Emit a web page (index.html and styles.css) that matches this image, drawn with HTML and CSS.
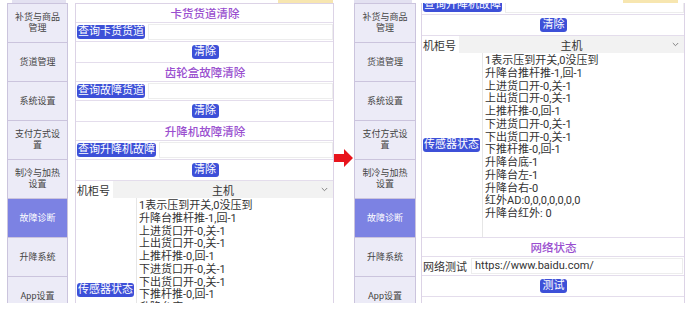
FILE: index.html
```html
<!DOCTYPE html>
<html lang="zh-CN">
<head>
<meta charset="utf-8">
<title>故障诊断</title>
<link rel="stylesheet" href="styles.css">
</head>
<body>
<div class="page">
  <div class="phone phone-left">
    <div class="strip"><span class="strip-tab"></span><span class="strip-yellow"></span></div>
    <div class="body">
      <nav class="sidebar">
        <div class="nav-item">补货与商品管理</div>
        <div class="nav-item">货道管理</div>
        <div class="nav-item">系统设置</div>
        <div class="nav-item">支付方式设置</div>
        <div class="nav-item">制冷与加热设置</div>
        <div class="nav-item active">故障诊断</div>
        <div class="nav-item">升降系统</div>
        <div class="nav-item">App设置</div>
      </nav>
      <div class="content">
        <div class="panel panel-top">
          <div class="row title-row">卡货货道清除</div>
          <div class="row query-row"><span class="btn">查询卡货货道</span><span class="field"></span></div>
          <div class="row action-row"><span class="btn btn-short">清除</span></div>
          <div class="row title-row">齿轮盒故障清除</div>
          <div class="row query-row"><span class="btn">查询故障货道</span><span class="field"></span></div>
          <div class="row action-row"><span class="btn btn-short">清除</span></div>
          <div class="row title-row">升降机故障清除</div>
          <div class="row query-row"><span class="btn">查询升降机故障</span><span class="field"></span></div>
          <div class="row action-row"><span class="btn btn-short">清除</span></div>
          <div class="row cabinet-row">
            <span class="label">机柜号</span>
            <div class="select"><span></span><span>主机</span><svg class="chev" width="7" height="5" viewBox="0 0 7 5"><path d="M0.8 1 L3.5 3.7 L6.2 1" fill="none" stroke="#777" stroke-width="0.9"/></svg></div>
          </div>
          <div class="row sensor-row">
            <span class="btn">传感器状态</span>
            <div class="sensor-box">
              <div>1表示压到开关,0没压到</div>
              <div>升降台推杆推-1,回-1</div>
              <div>上进货口开-0,关-1</div>
              <div>上出货口开-0,关-1</div>
              <div>上推杆推-0,回-1</div>
              <div>下进货口开-0,关-1</div>
              <div>下出货口开-0,关-1</div>
              <div>下推杆推-0,回-1</div>
              <div>升降台底-1</div>
              <div>升降台左-1</div>
              <div>升降台右-0</div>
              <div>红外AD:0,0,0,0,0,0,0</div>
              <div>升降台红外: 0</div>
            </div>
          </div>
        </div>
      </div>
    </div>
  </div>

  <div class="arrow">
    <svg width="19" height="18" viewBox="0 0 19 18"><polygon points="0,5 10,5 10,0 19,9 10,18 10,13 0,13" fill="#e8141c"/></svg>
  </div>

  <div class="phone phone-right">
    <div class="strip"><span class="strip-tab"></span><span class="strip-yellow"></span></div>
    <div class="body">
      <nav class="sidebar">
        <div class="nav-item">补货与商品管理</div>
        <div class="nav-item">货道管理</div>
        <div class="nav-item">系统设置</div>
        <div class="nav-item">支付方式设置</div>
        <div class="nav-item">制冷与加热设置</div>
        <div class="nav-item active">故障诊断</div>
        <div class="nav-item">升降系统</div>
        <div class="nav-item">App设置</div>
      </nav>
      <div class="content">
        <div class="panel panel-scrolled">
          <div class="row query-row"><span class="btn">查询升降机故障</span><span class="field"></span></div>
          <div class="row action-row"><span class="btn btn-short">清除</span></div>
          <div class="row cabinet-row">
            <span class="label">机柜号</span>
            <div class="select"><span></span><span>主机</span><svg class="chev" width="7" height="5" viewBox="0 0 7 5"><path d="M0.8 1 L3.5 3.7 L6.2 1" fill="none" stroke="#777" stroke-width="0.9"/></svg></div>
          </div>
          <div class="row sensor-row">
            <span class="btn">传感器状态</span>
            <div class="sensor-box">
              <div>1表示压到开关,0没压到</div>
              <div>升降台推杆推-1,回-1</div>
              <div>上进货口开-0,关-1</div>
              <div>上出货口开-0,关-1</div>
              <div>上推杆推-0,回-1</div>
              <div>下进货口开-0,关-1</div>
              <div>下出货口开-0,关-1</div>
              <div>下推杆推-0,回-1</div>
              <div>升降台底-1</div>
              <div>升降台左-1</div>
              <div>升降台右-0</div>
              <div>红外AD:0,0,0,0,0,0,0</div>
              <div>升降台红外: 0</div>
            </div>
          </div>
          <div class="row title-row">网络状态</div>
          <div class="row net-row"><span class="label">网络测试</span><span class="net-input">https://www.baidu.com/</span></div>
          <div class="row action-row"><span class="btn btn-short">测试</span></div>
        </div>
      </div>
    </div>
  </div>
</div>
</body>
</html>
```
FILE: styles.css
```css
* { box-sizing: border-box; }
html, body { margin: 0; padding: 0; background: #fff; }
body {
  font-family: Roboto, "Noto Sans CJK SC", sans-serif;
  color: #333;
}
.page {
  display: flex;
  align-items: flex-start;
  padding-left: 7px;
  width: 685px;
  height: 311px;
  overflow: hidden;
}
.phone {
  height: 303px;
  overflow: hidden;
  display: flex;
  flex-direction: column;
  flex-shrink: 0;
}
.phone-left { width: 327px; }
.phone-right { width: 331px; }

.strip { height: 3px; display: flex; flex-shrink: 0; }
.strip-tab { background: #e3e1f1; height: 3px; }
.strip-yellow { background: #f7e6b0; height: 3px; }
.phone-left .strip-tab { margin-left: 5px; width: 54px; }
.phone-left .strip-yellow { margin-left: 212px; width: 55px; }
.phone-right .strip-tab { margin-left: 0; width: 58px; }
.phone-right .strip-yellow { margin-left: 211px; width: 55px; }

.body { flex: 1; display: flex; min-height: 0; }

.sidebar {
  width: 61px;
  flex-shrink: 0;
  border: 1px solid #cbc4dd;
  border-bottom: none;
  background: #ecebf7;
  display: flex;
  flex-direction: column;
}
.phone-right .sidebar { width: 62px; }
.nav-item {
  flex-shrink: 0;
  height: 39px;
  border-bottom: 1px solid #cbc4dd;
  display: flex;
  align-items: center;
  justify-content: center;
  text-align: center;
  font-size: 9px;
  line-height: 11px;
  color: #444;
  padding: 0 6px;
}
.nav-item.active { background: #7c82e3; color: #fff; }

.content {
  flex: 1;
  margin-left: 7px;
  border-left: 1px solid #dcd3e6;
  border-right: 1px solid #dcd3e6;
  overflow: hidden;
}
.phone-right .content { margin-left: 5px; }
.panel-top { border-top: 1px solid #dcd3e6; }
.panel-scrolled { margin-top: -7px; }

.row {
  border-bottom: 1px solid #e4ddec;
  display: flex;
  align-items: center;
  padding-left: 1px;
  flex-shrink: 0;
}
.title-row {
  height: 19px;
  justify-content: center;
  color: #9a4fcf;
  font-size: 11.5px;
  font-weight: 500;
}
.query-row { height: 19px; }
.action-row { height: 21px; justify-content: center; }

.btn {
  background: #3d50d8;
  color: #fff;
  font-size: 11px;
  line-height: 14px;
  padding: 0 1px;
  border-radius: 3px;
  white-space: nowrap;
}
.btn-short { padding: 0 2.5px; }
.field {
  flex: 1;
  height: 16px;
  margin-left: 3px;
  border: 1px solid #ededed;
}

.cabinet-row { height: 17px; border-bottom: none; }
.label { font-size: 11px; color: #333; margin-right: 3px; white-space: nowrap; }
.select {
  flex: 1;
  height: 17px;
  background: #f2f2f2;
  display: grid;
  grid-template-columns: 1fr auto 1fr;
  align-items: center;
  font-size: 11px;
  color: #333;
}
.chev { justify-self: end; margin-right: 5px; }

.sensor-row { align-items: center; }
.sensor-box {
  flex: 1;
  height: 184px;
  margin-left: 2px;
  border-left: 1px solid #e6e6e6;
  padding: 2px 0 0 2px;
  font-size: 11px;
  line-height: 12.75px;
  color: #333;
  white-space: nowrap;
}

.net-row { height: 19px; }
.net-input {
  flex: 1;
  height: 16px;
  margin-left: 1px;
  margin-right: 1px;
  border: 1px solid #ededed;
  font-size: 11px;
  line-height: 14px;
  padding-left: 3px;
  color: #333;
}

.arrow {
  width: 20px;
  flex-shrink: 0;
  margin-top: 149px;
  display: flex;
}
```
